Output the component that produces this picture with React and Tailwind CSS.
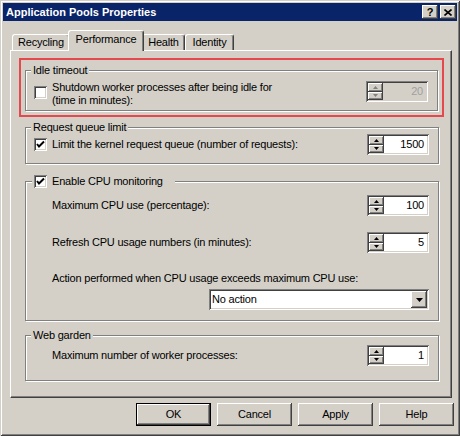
import React from 'react';

// classic 3D edges
const raised = 'shadow-[inset_-1px_-1px_0_#404040,inset_1px_1px_0_#fff,inset_-2px_-2px_0_#808080,inset_2px_2px_0_#d4d0c8]';
const sunken = 'shadow-[inset_1px_1px_0_#808080,inset_-1px_-1px_0_#fff,inset_2px_2px_0_#404040,inset_-2px_-2px_0_#d4d0c8]';
const etched = 'shadow-[inset_1px_1px_0_#fff,1px_1px_0_#fff]';

const Checkbox = ({ checked }) => (
  <div className={`h-[13px] w-[13px] shrink-0 bg-white ${sunken}`}>
    {checked && (
      <svg width="13" height="13" viewBox="0 0 13 13">
        <polyline points="3,6 5,8.5 10,3.5" fill="none" stroke="#000" strokeWidth="2" />
      </svg>
    )}
  </div>
);

const SpinBtn = ({ up, disabled }) => (
  <div className={`flex flex-1 items-center justify-center bg-[#d4d0c8] ${raised}`}>
    <svg width="5" height="3" viewBox="0 0 5 3">
      <polygon points={up ? '2.5,0 5,3 0,3' : '0,0 5,0 2.5,3'} fill={disabled ? '#808080' : '#000'} />
    </svg>
  </div>
);

const Spinner = ({ value, disabled }) => (
  <div className={`flex h-[21px] w-[62px] shrink-0 p-[2px] ${disabled ? 'bg-[#d4d0c8]' : 'bg-white'} ${sunken}`}>
    <div className="flex w-[15px] flex-col">
      <SpinBtn up disabled={disabled} />
      <SpinBtn disabled={disabled} />
    </div>
    <div className={`flex-1 pr-[3px] text-right leading-[17px] ${disabled ? 'text-[#a0a0a0]' : 'text-black'}`}>{value}</div>
  </div>
);

const Dropdown = () => (
  <div className={`flex h-[21px] w-[220px] bg-white p-[2px] ${sunken}`}>
    <div className="flex-1 pl-[1px] leading-[17px]">No action</div>
    <div className={`flex w-[16px] items-center justify-center bg-[#d4d0c8] ${raised}`}>
      <svg width="7" height="4" viewBox="0 0 7 4">
        <polygon points="0,0 7,0 3.5,4" fill="#000" />
      </svg>
    </div>
  </div>
);

const Row = ({ label, value, className }) => (
  <div className={`flex h-[21px] items-center ${className}`}>
    <span>{label}</span>
    <div className="ml-auto">
      <Spinner value={value} />
    </div>
  </div>
);

const Tab = ({ label, width, active }) => (
  <div
    style={{ width }}
    className={
      active
        ? 'relative z-10 -mx-[2px] -mb-[1px] h-[21px] rounded-t-[3px] border-l border-t border-r border-white border-r-[#404040] bg-[#d4d0c8] pt-[2px] text-center leading-[13px] shadow-[inset_-1px_0_0_#808080]'
        : 'h-[16px] rounded-t-[3px] border-l border-t border-r border-white border-r-[#404040] bg-[#d4d0c8] pt-[1px] text-center leading-[13px] shadow-[inset_-1px_0_0_#808080]'
    }
  >
    {label}
  </div>
);

const Button = ({ label, isDefault }) => (
  <div className={`h-[23px] w-[75px] ${isDefault ? 'border border-black' : ''}`}>
    <div className={`flex h-full w-full items-center justify-center bg-[#d4d0c8] ${raised}`}>{label}</div>
  </div>
);

export default function App() {
  const tabs = [
    { label: 'Recycling', width: 58 },
    { label: 'Performance', width: 76, active: true },
    { label: 'Health', width: 43 },
    { label: 'Identity', width: 49 },
  ];

  return (
    <div
      className={`flex h-[436px] w-[460px] flex-col bg-[#d4d0c8] p-[3px] font-['Liberation_Sans',Arial,sans-serif] text-[11px] tracking-[-0.2px] text-black shadow-[inset_1px_1px_0_#d4d0c8,inset_-1px_-1px_0_#404040,inset_2px_2px_0_#fff,inset_-2px_-2px_0_#808080]`}
    >
      {/* title bar */}
      <div className="flex h-[18px] items-center justify-between bg-[#0a246a] pl-[3px] pr-[1px]">
        <span className="font-bold tracking-normal text-white">Application Pools Properties</span>
        <div className="flex gap-[2px]">
          <div className={`flex h-[14px] w-[16px] items-center justify-center bg-[#d4d0c8] text-[11px] font-bold leading-none tracking-normal ${raised}`}>?</div>
          <div className={`flex h-[14px] w-[16px] items-center justify-center bg-[#d4d0c8] ${raised}`}>
            <svg width="8" height="7" viewBox="0 0 8 7">
              <path d="M0.5 0.5 L7.5 6.5 M7.5 0.5 L0.5 6.5" stroke="#000" strokeWidth="1.6" />
            </svg>
          </div>
        </div>
      </div>

      {/* tabs */}
      <div className="ml-[7px] mt-[9px] flex h-[20px] items-end pl-[2px]">
        {tabs.map((t) => (
          <Tab key={t.label} {...t} />
        ))}
      </div>

      {/* tab panel */}
      <div className="ml-[7px] flex h-[348px] w-[442px] flex-col overflow-hidden border-l border-t border-r border-b border-white border-r-[#404040] border-b-[#404040] shadow-[inset_-1px_-1px_0_#808080]">
        {/* highlighted idle timeout */}
        <div className="ml-[8px] mt-[7px] w-[425px] border-2 border-[#e5484d] p-[4px]">
          <fieldset className={`border border-[#808080] ${etched}`}>
            <legend className="ml-[5px] bg-[#d4d0c8] px-[2px] leading-[13px]">Idle timeout</legend>
            <div className="mt-[4px] flex items-start pb-[3px] pl-[8px] pr-[9px]">
              <div className="mt-[5px]">
                <Checkbox />
              </div>
              <div className="ml-[5px] leading-[13px]">
                Shutdown worker processes after being idle for
                <br />
                (time in minutes):
              </div>
              <div className="ml-auto">
                <Spinner value="20" disabled />
              </div>
            </div>
          </fieldset>
        </div>

        <fieldset className={`ml-[14px] mt-[4px] w-[414px] border border-[#808080] ${etched}`}>
          <legend className="ml-[5px] bg-[#d4d0c8] px-[2px] leading-[13px]">Request queue limit</legend>
          <div className="mb-[8px] flex h-[21px] items-center pl-[8px] pr-[9px]">
            <Checkbox checked />
            <span className="ml-[5px]">Limit the kernel request queue (number of requests):</span>
            <div className="ml-auto">
              <Spinner value="1500" />
            </div>
          </div>
        </fieldset>

        <fieldset className={`ml-[14px] mt-[11px] w-[414px] border border-[#808080] ${etched}`}>
          <legend className="ml-[6px] w-[143px] bg-[#d4d0c8] pl-[2px] leading-[13px]">
            <span className="flex items-center gap-[5px]">
              <Checkbox checked />
              <span>Enable CPU monitoring</span>
            </span>
          </legend>
          <div className="pb-[10px] pl-[26px] pr-[9px]">
            <Row label="Maximum CPU use (percentage):" value="100" className="mt-[7px]" />
            <Row label="Refresh CPU usage numbers (in minutes):" value="5" className="mt-[16px]" />
            <div className="mt-[19px] leading-[13px]">Action performed when CPU usage exceeds maximum CPU use:</div>
            <div className="mt-[4px] flex justify-end">
              <Dropdown />
            </div>
          </div>
        </fieldset>

        <fieldset className={`ml-[14px] mt-[8px] w-[414px] border border-[#808080] ${etched}`}>
          <legend className="ml-[5px] bg-[#d4d0c8] px-[2px] leading-[13px]">Web garden</legend>
          <div className="pb-[14px] pl-[26px] pr-[9px]">
            <Row label="Maximum number of worker processes:" value="1" className="mt-[3px]" />
          </div>
        </fieldset>
      </div>

      {/* dialog buttons */}
      <div className="mt-[5px] flex justify-end gap-[6px] pr-[3px]">
        <Button label="OK" isDefault />
        <Button label="Cancel" />
        <Button label="Apply" />
        <Button label="Help" />
      </div>
    </div>
  );
}
